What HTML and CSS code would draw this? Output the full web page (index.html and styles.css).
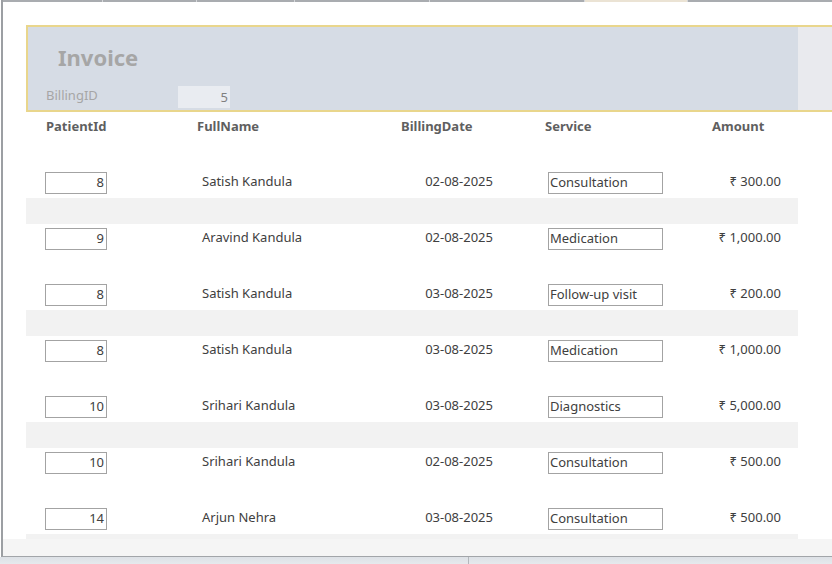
FILE: index.html
```html
<!DOCTYPE html>
<html>
<head>
<meta charset="utf-8">
<title>Invoice</title>
<link rel="stylesheet" href="styles.css">
</head>
<body>
<div class="app">
  <div class="frame">
    <div class="tabs">
      <span class="tab t1"></span>
      <span class="tab t2"></span>
      <span class="tab t3"></span>
      <span class="tab t4"></span>
      <span class="tab t5"></span>
      <span class="tab active"></span>
      <span class="tab rest"></span>
    </div>
    <div class="main">
      <div class="form">
        <div class="header">
          <div class="header-main">
            <div class="title">Invoice</div>
            <div class="id-row">
              <span class="id-label">BillingID</span>
              <span class="id-box">5</span>
            </div>
          </div>
          <div class="header-side"></div>
        </div>
        <div class="colheads">
          <span class="h-id">PatientId</span>
          <span class="h-name">FullName</span>
          <span class="h-date">BillingDate</span>
          <span class="h-svc">Service</span>
          <span class="h-amt">Amount</span>
        </div>
        <div class="record">
          <div class="band"></div>
          <div class="row">
            <span class="c-id box">8</span>
            <span class="c-name">Satish Kandula</span>
            <span class="c-date">02-08-2025</span>
            <span class="c-svc box">Consultation</span>
            <span class="c-amt">₹ 300.00</span>
          </div>
        </div>
        <div class="record alt">
          <div class="band"></div>
          <div class="row">
            <span class="c-id box">9</span>
            <span class="c-name">Aravind Kandula</span>
            <span class="c-date">02-08-2025</span>
            <span class="c-svc box">Medication</span>
            <span class="c-amt">₹ 1,000.00</span>
          </div>
        </div>
        <div class="record">
          <div class="band"></div>
          <div class="row">
            <span class="c-id box">8</span>
            <span class="c-name">Satish Kandula</span>
            <span class="c-date">03-08-2025</span>
            <span class="c-svc box">Follow-up visit</span>
            <span class="c-amt">₹ 200.00</span>
          </div>
        </div>
        <div class="record alt">
          <div class="band"></div>
          <div class="row">
            <span class="c-id box">8</span>
            <span class="c-name">Satish Kandula</span>
            <span class="c-date">03-08-2025</span>
            <span class="c-svc box">Medication</span>
            <span class="c-amt">₹ 1,000.00</span>
          </div>
        </div>
        <div class="record">
          <div class="band"></div>
          <div class="row">
            <span class="c-id box">10</span>
            <span class="c-name">Srihari Kandula</span>
            <span class="c-date">03-08-2025</span>
            <span class="c-svc box">Diagnostics</span>
            <span class="c-amt">₹ 5,000.00</span>
          </div>
        </div>
        <div class="record alt">
          <div class="band"></div>
          <div class="row">
            <span class="c-id box">10</span>
            <span class="c-name">Srihari Kandula</span>
            <span class="c-date">02-08-2025</span>
            <span class="c-svc box">Consultation</span>
            <span class="c-amt">₹ 500.00</span>
          </div>
        </div>
        <div class="record">
          <div class="band"></div>
          <div class="row">
            <span class="c-id box">14</span>
            <span class="c-name">Arjun Nehra</span>
            <span class="c-date">03-08-2025</span>
            <span class="c-svc box">Consultation</span>
            <span class="c-amt">₹ 500.00</span>
          </div>
        </div>
        <div class="record alt">
          <div class="band"></div>
        </div>
      </div>
    </div>
    <div class="footer"></div>
  </div>
  <div class="statusbar">
    <span class="sb-left"></span>
    <span class="sb-right"></span>
  </div>
</div>
</body>
</html>
```

FILE: styles.css
```css
* { box-sizing: border-box; }

html, body {
  margin: 0;
  padding: 0;
  background: #ffffff;
}

body {
  width: 832px;
  height: 564px;
  overflow: hidden;
  font-family: "Noto Sans", "DejaVu Sans", sans-serif;
  font-size: 13px;
  color: #404040;
}

.app {
  display: flex;
  flex-direction: column;
  height: 564px;
}

.frame {
  display: flex;
  flex-direction: column;
  height: 557px;
  margin-left: 1px;
  border-left: 2px solid #9c9fa3;
  border-bottom: 1px solid #a2a5a9;
}

.tabs {
  display: flex;
  height: 2px;
  flex: none;
}

.tab {
  height: 2px;
  background: #a9acb0;
  border-right: 1px solid #d5d7da;
}

.t1 { width: 100px; }
.t2 { width: 94px; }
.t3 { width: 98px; }
.t4 { width: 135px; }
.t5 { width: 155px; }
.tab.active { width: 103px; background: #ebe3d4; }
.tab.rest { flex: 1; border-right: none; }

.main {
  flex: 1;
  overflow: hidden;
  background: #ffffff;
  padding: 23px 0 0 23px;
}

.form {
  display: flex;
  flex-direction: column;
}

.header {
  display: flex;
  height: 87px;
  border-top: 2px solid #e9d68c;
  border-left: 2px solid #e9d68c;
  border-bottom: 2px solid #e9d68c;
}

.header-main {
  width: 770px;
  background: #d6dce5;
  display: flex;
  flex-direction: column;
}

.header-side {
  flex: 1;
  background: #e9eaee;
}

.title {
  margin: 15px 0 0 30px;
  height: 30px;
  line-height: 30px;
  font-size: 22px;
  font-weight: 700;
  color: #a6a6a6;
}

.id-row {
  display: flex;
  align-items: flex-start;
  margin-top: 14px;
  height: 22px;
}

.id-label {
  width: 150px;
  padding-left: 18px;
  line-height: 18px;
  color: #a6a6a6;
  font-size: 13px;
}

.id-box {
  width: 52px;
  height: 22px;
  line-height: 22px;
  background: #e9ecf1;
  color: #7f7f7f;
  text-align: right;
  padding-right: 2px;
}

.colheads {
  display: flex;
  height: 30px;
  align-items: center;
  padding: 0 0 2px 20px;
  font-weight: 700;
  color: #5f5f5f;
  font-size: 13px;
}

.h-id { width: 151px; }
.h-name { width: 204px; }
.h-date { width: 144px; }
.h-svc { width: 167px; }
.h-amt { width: 80px; }

.record {
  width: 772px;
  height: 56px;
  flex: none;
}

.band {
  height: 26px;
}

.record.alt .band {
  background: #f2f2f2;
}

.row {
  display: flex;
  align-items: center;
  height: 30px;
  padding: 4px 0 4px 19px;
}

.row > span {
  height: 22px;
  line-height: 19px;
  white-space: nowrap;
}

.box {
  border: 1px solid #a3a3a3;
  background: #ffffff;
}

.c-id {
  width: 62px;
  text-align: right;
  padding-right: 2px;
}

.c-name {
  margin-left: 95px;
  width: 198px;
}

.c-date {
  width: 93px;
  text-align: right;
}

.c-svc {
  margin-left: 55px;
  width: 115px;
  padding-left: 1px;
}

.c-amt {
  width: 118px;
  text-align: right;
}

.footer {
  height: 17px;
  flex: none;
  background: #f5f5f5;
}

.statusbar {
  flex: 1;
  display: flex;
  background: linear-gradient(#dde1e6, #e6e9ed);
}

.sb-left {
  width: 469px;
  border-right: 1px solid #b3b7bc;
}

.sb-right {
  flex: 1;
}
```
